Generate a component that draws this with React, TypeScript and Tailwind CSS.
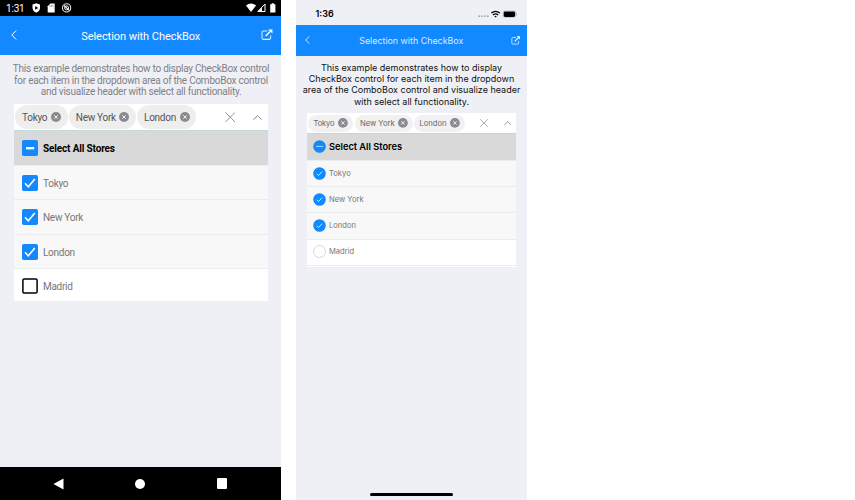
import React from "react";

const cities = ["Tokyo", "New York", "London", "Madrid"];

function Back({ className }: { className: string }) {
  return (
    <svg viewBox="0 0 6 10" className={className} fill="none" stroke="white" strokeWidth="1">
      <path d="M5.2 .5 .8 5l4.4 4.5" />
    </svg>
  );
}

function External({ className }: { className: string }) {
  return (
    <svg viewBox="0 0 12 12" className={className} fill="none" stroke="white">
      <path d="M6.5 2H2.1Q.8 2 .8 3.3v6.2q0 1.3 1.3 1.3h6.4q1.3 0 1.3-1.3V6.8" strokeWidth="1.1" opacity=".85" />
      <path d="m4.6 7.3 5-5" strokeWidth="1.5" />
      <path d="M7.2.4h4.5v4.4z" fill="white" stroke="none" />
    </svg>
  );
}

function ChipClose({ className }: { className: string }) {
  return (
    <svg viewBox="0 0 10 10" className={className}>
      <circle cx="5" cy="5" r="5" fill="#8b8a8e" />
      <path d="m3.3 3.3 3.4 3.4m0-3.4L3.3 6.7" stroke="#f1f1f1" strokeWidth="1" />
    </svg>
  );
}

function Cross({ className }: { className: string }) {
  return (
    <svg viewBox="0 0 10 10" className={className} stroke="#8c8c8c" strokeWidth=".9">
      <path d="m.3.3 9.4 9.4m0-9.4L.3 9.7" />
    </svg>
  );
}

function Chevron({ className }: { className: string }) {
  return (
    <svg viewBox="0 0 9 5" className={className} fill="none" stroke="#858585" strokeWidth="1">
      <path d="M.4 4.6 4.5.7l4.1 3.9" />
    </svg>
  );
}

function SquareBox({ state }: { state: "on" | "off" | "mixed" }) {
  return (
    <svg viewBox="0 0 16 16" className="size-4 shrink-0">
      {state === "off" ? (
        <rect x=".9" y=".9" width="14.2" height="14.2" rx="1.4" fill="white" stroke="black" strokeWidth="1.5" />
      ) : (
        <rect width="16" height="16" rx="1.8" fill="#1389fb" />
      )}
      {state === "on" && <path d="m3 8.2 3.3 3.5 6.5-7.6" fill="none" stroke="white" strokeWidth="1.6" />}
      {state === "mixed" && <path d="M4 8.2h8.2" stroke="white" strokeWidth="2.4" />}
    </svg>
  );
}

function RoundBox({ state }: { state: "on" | "off" | "mixed" }) {
  return (
    <svg viewBox="0 0 13 13" className="mb-px size-[13px] shrink-0">
      {state === "off" ? (
        <circle cx="6.5" cy="6.5" r="6" fill="white" stroke="#d4d4d6" strokeWidth=".9" />
      ) : (
        <circle cx="6.5" cy="6.5" r="6.3" fill="#1389fb" />
      )}
      {state === "on" && <path d="m3.8 6.8 1.7 1.7 3.7-3.9" fill="none" stroke="white" strokeWidth=".8" />}
      {state === "mixed" && <path d="M3 6.4h7.2" stroke="#d5eaff" strokeWidth=".8" />}
    </svg>
  );
}

function AndroidPhone() {
  return (
    <div className="flex h-full w-[281px] flex-col bg-[#eff0f5] font-[Roboto,sans-serif]">
      <div className="flex h-4 items-center bg-black pl-[6px] pr-1 text-white">
        <span className="w-[26px] pt-px text-[10px] leading-4 tracking-[-0.2px]">1:31</span>
        <svg viewBox="0 0 40 10" className="h-[10px] w-10">
          <path d="M4.3.2 8 1.5v3.2Q8 8 4.3 9.8.5 8 .5 4.7V1.5z" fill="white" />
          <path d="M3.2 3v3.8L6.3 4.9z" fill="black" />
          <path d="M18.4.5h4.3v9h-7V3.2z" fill="white" />
          <path d="M18 1.8v2M19.5 1.8v2M21 1.8v2" stroke="#555" strokeWidth=".5" />
          <circle cx="34.6" cy="4.9" r="4.1" fill="none" stroke="white" />
          <circle cx="34.6" cy="4.9" r="2" fill="none" stroke="white" />
          <path d="m32 2.3 5.4 5.4" stroke="white" strokeWidth="1.2" />
        </svg>
        <svg viewBox="0 0 31 10" className="ml-auto h-[10px] w-[31px]">
          <path d="M0 2.4q5-4 10 0L5 9z" fill="white" />
          <path d="M11.8 8.5 19 1v7.5z" fill="none" stroke="white" />
          <path d="M11.8 8.8 16 4.5v4.3z" fill="white" />
          <path d="M25.7.3h2.2v1h1.5v8.2h-5.2V1.3h1.5z" fill="white" />
        </svg>
      </div>
      <div className="flex h-[38.6px] items-center justify-between bg-[#1389ff] pl-[10.5px] pr-[8px]">
        <Back className="h-[10px] w-[6px]" />
        <span className="pl-[4px] pt-[3px] text-[11px] tracking-[-0.05px] text-white">Selection with CheckBox</span>
        <External className="mb-px h-[11.5px] w-[12px]" />
      </div>
      <p className="mt-[8.8px] h-[40.9px] whitespace-nowrap pl-px text-center text-[10px] leading-[11.2px] tracking-[-0.25px] text-[#808084]">
        This example demonstrates how to display CheckBox control
        <br />
        for each item in the dropdown area of the ComboBox control
        <br />
        and visualize header with select all functionality.
      </p>
      <div className="mx-[14px] mr-[13px] bg-white text-[10px] tracking-[-0.28px]">
        <div className="flex h-[26px] items-center gap-[1.3px] pl-px pr-[6.5px] text-[#555]">
          <div className="flex h-6 w-[52.5px] items-center justify-between rounded-full bg-[#eee] pl-[7px] pr-[6.5px]">
            Tokyo<ChipClose className="size-[10px]" />
          </div>
          <div className="flex h-6 w-[67px] items-center justify-between rounded-full bg-[#eee] pl-[7px] pr-[6.5px]">
            New York<ChipClose className="size-[10px]" />
          </div>
          <div className="flex h-6 w-[59px] items-center justify-between rounded-full bg-[#eee] pl-[7px] pr-[6.5px]">
            London<ChipClose className="size-[10px]" />
          </div>
          <Cross className="ml-auto mr-4 size-[10.5px]" />
          <Chevron className="h-[5px] w-[9px]" />
        </div>
        <div className="flex h-[34.8px] items-center gap-[5px] border-t-[1.5px] border-[#bfdcda] bg-[#d9d9d9] pl-2 text-[10px] font-bold tracking-[-0.15px] text-black">
          <SquareBox state="mixed" />
          Select All Stores
        </div>
        {cities.map((c, i) => (
          <div
            key={c}
            className={
              i === 3
                ? "flex h-[33px] items-center gap-[5px] border-t border-[#ececec] bg-white pl-2 pt-px text-[#777]"
                : "flex h-[34.4px] items-center gap-[5px] border-t border-[#ececec] bg-[#f8f8f8] pl-2 text-[#777]"
            }
          >
            <SquareBox state={i === 3 ? "off" : "on"} />
            <span className="pt-px">{c}</span>
          </div>
        ))}
      </div>
      <div className="mt-auto flex h-[33px] items-center justify-between bg-black pl-[53px] pr-[54px]">
        <svg viewBox="0 0 11 12" className="h-3 w-[11px]" fill="white">
          <path d="M.5 6 10.5.5v11z" />
        </svg>
        <div className="size-[10px] rounded-full bg-white" />
        <div className="size-[10.5px] rounded-[1px] bg-white" />
      </div>
    </div>
  );
}

function IosPhone() {
  return (
    <div className="flex h-full w-[231px] flex-col bg-[#eff0f5] font-[Inter,sans-serif]">
      <div className="flex h-[24.6px] items-center pl-[19.5px] pr-[10px] pt-[3.6px]">
        <span className="text-[9px] font-semibold text-black">1:36</span>
        <svg viewBox="0 0 40 9" className="ml-auto h-[9px] w-10">
          <g fill="#a4a5aa">
            <circle cx="2.2" cy="6.2" r=".9" />
            <circle cx="5.1" cy="6.2" r=".9" />
            <circle cx="8" cy="6.2" r=".9" />
            <circle cx="10.9" cy="6.2" r=".9" />
          </g>
          <g fill="none" stroke="black" strokeWidth="1.3">
            <path d="M14.3 3.1q4.3-3.6 8.6 0" />
            <path d="M16 5q2.6-2.2 5.2 0" />
          </g>
          <path d="M17.4 6.3q1.2-.9 2.4 0l-1.2 1.3z" />
          <rect x="26" y=".9" width="12.8" height="6.6" rx="1.8" fill="none" stroke="#aaa" strokeWidth=".5" />
          <rect x="26.7" y="1.5" width="11.4" height="5.4" rx="1.3" />
          <path d="M39.5 3.2v2" stroke="#999" strokeWidth=".7" />
        </svg>
      </div>
      <div className="flex h-[31.2px] items-center justify-between bg-[#1389ff] pl-[8.5px] pr-[6.5px]">
        <Back className="h-[8px] w-[5px]" />
        <span className="pl-[2px] text-[8.9px] text-[#d9ebff]">Selection with CheckBox</span>
        <External className="h-[9px] w-[9.5px]" />
      </div>
      <p className="mt-[6.2px] h-[51.3px] whitespace-nowrap text-center text-[9px] leading-[11.2px] text-[#111]">
        This example demonstrates how to display
        <br />
        CheckBox control for each item in the dropdown
        <br />
        area of the ComboBox control and visualize header
        <br />
        with select all functionality.
      </p>
      <div className="ml-[11px] mr-[11px] bg-white text-[7.6px]">
        <div className="flex h-5 items-center gap-[1.5px] pl-px pr-[5px] text-[#666]">
          <div className="flex h-[17.5px] w-[45px] items-center justify-between rounded-full bg-[#f1f1f2] pl-[5.5px] pr-[5px]">
            <span className="tracking-[-0.02em]">Tokyo</span>
            <ChipClose className="size-[9.8px]" />
          </div>
          <div className="flex h-[17.5px] w-[58px] items-center justify-between rounded-full bg-[#f1f1f2] pl-[5.5px] pr-[5px]">
            New York<ChipClose className="size-[9.8px]" />
          </div>
          <div className="flex h-[17.5px] w-[51px] items-center justify-between rounded-full bg-[#f1f1f2] pl-[5.5px] pr-[5px]">
            London<ChipClose className="size-[9.8px]" />
          </div>
          <Cross className="ml-auto mr-[14px] size-[8px]" />
          <Chevron className="h-[4.5px] w-[7.5px]" />
        </div>
        <div className="flex h-[26.7px] items-center gap-[3px] border-t border-[#b4d6fa] bg-[#d9d9d9] pl-[6px] text-[9.25px] font-semibold text-black">
          <RoundBox state="mixed" />
          Select All Stores
        </div>
        {cities.map((c, i) => (
          <div
            key={c}
            className={
              i === 3
                ? "flex h-[26.2px] items-center gap-[3px] border-t border-[#ececec] bg-white pl-[6px] text-[#777]"
                : "flex h-[26.2px] items-center gap-[3px] border-t border-[#ececec] bg-[#f8f8f8] pl-[6px] text-[#777]"
            }
          >
            <RoundBox state={i === 3 ? "off" : "on"} />
            {c}
          </div>
        ))}
        <div className="h-[2.6px] border-t border-[#ececec]" />
      </div>
      <div className="mb-[4.5px] mt-auto h-[3px] w-[83px] self-center rounded-full bg-black" />
    </div>
  );
}

export default function App() {
  return (
    <div className="flex h-[500px] w-[855px] gap-[15px] overflow-hidden bg-white">
      <AndroidPhone />
      <IosPhone />
    </div>
  );
}
